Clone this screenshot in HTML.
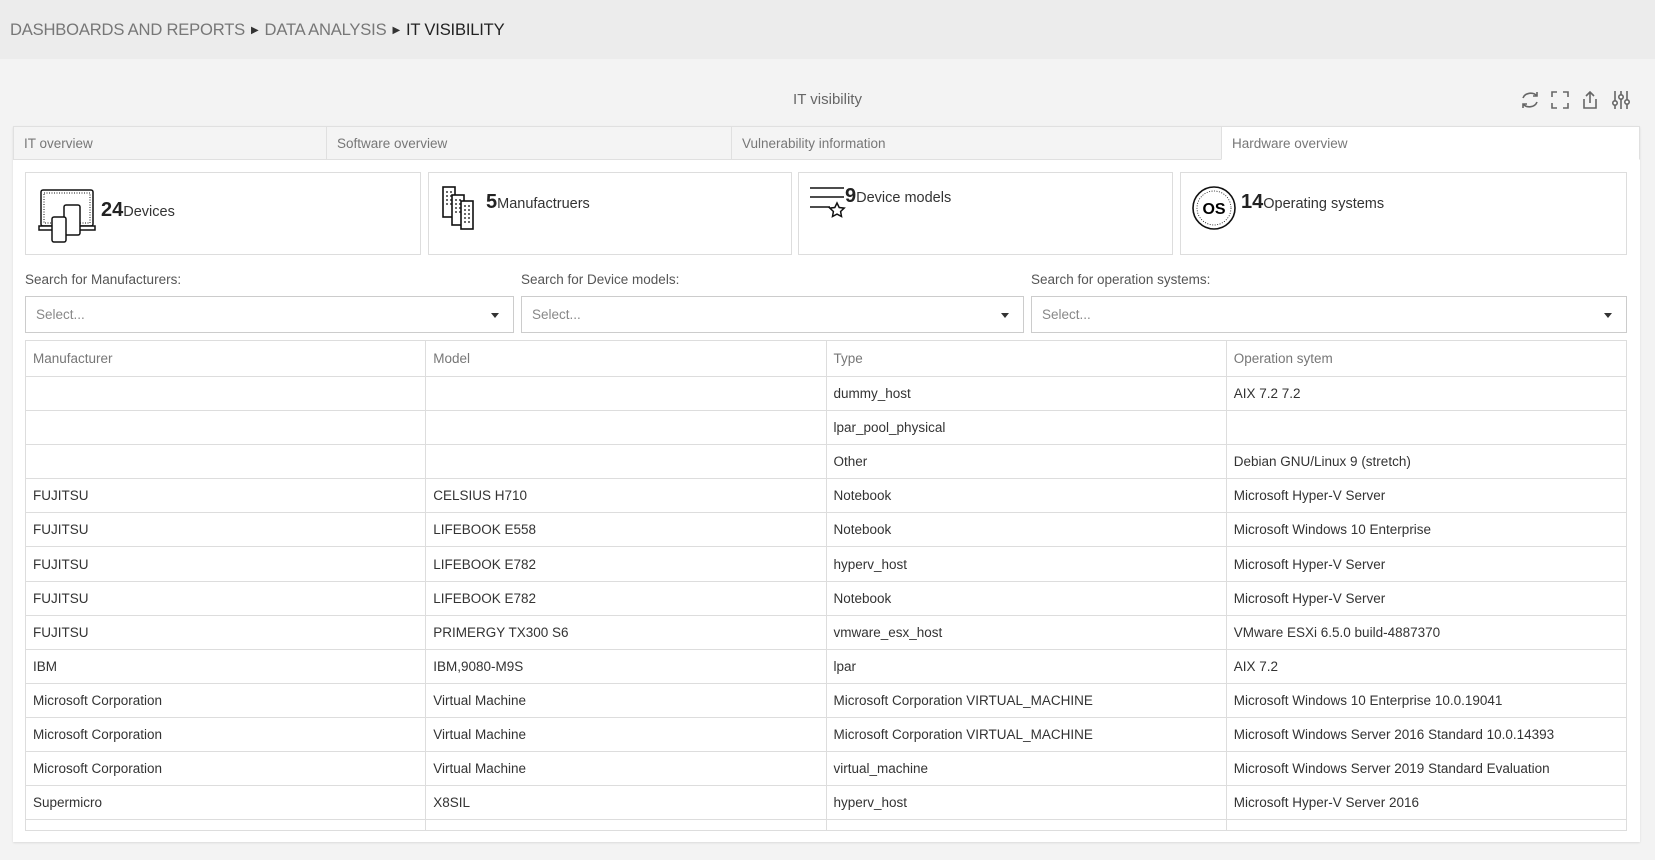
<!DOCTYPE html>
<html><head><style>
*{box-sizing:border-box;margin:0;padding:0}
body{width:1655px;height:860px;background:#f3f3f3;font-family:"Liberation Sans",sans-serif;color:#333;position:relative;overflow:hidden;font-size:13.5px}
.hdr{position:absolute;left:0;top:0;width:1655px;height:59px;background:#ececec}
.bc{position:absolute;left:10px;top:20px;font-size:16.6px;color:#777;letter-spacing:-0.2px}
.bc b{font-weight:normal;color:#222}
.bc i{font-style:normal;font-size:10px;color:#333;margin:0 6px;position:relative;top:-2px}
.title{position:absolute;left:0;width:1655px;top:91px;text-align:center;font-size:15px;color:#666}
.panel{position:absolute;left:13px;top:126px;width:1627px;height:716px;background:#fff;box-shadow:0 1px 2px rgba(0,0,0,.1)}
.tab{position:absolute;top:126px;height:34px;background:#f4f4f4;border:1px solid #e0e0e0;color:#777;padding:9px 10px;font-size:13.5px}
.card{position:absolute;top:172px;height:83px;border:1px solid #ddd;background:#fff}
.card .n{font-weight:bold;font-size:20px;color:#222}
.card .t{font-size:14.5px;color:#333}
.lbl{position:absolute;top:272px;font-size:13.5px;color:#555}
.sel{position:absolute;top:296px;height:37px;border:1px solid #ccc;background:#fff;color:#888;padding:10px 10px;font-size:13.5px}
.sel:after{content:"";position:absolute;right:14px;top:16px;border:4px solid transparent;border-top:5px solid #333}
table{position:absolute;left:25px;top:340px;width:1602px;border-collapse:collapse;table-layout:fixed}
td,th{border:1px solid #ddd;height:34.1px;padding:0 7px;text-align:left;font-weight:normal;font-size:13.5px;white-space:nowrap;overflow:hidden}
th{color:#777;height:36px}
</style></head><body>
<div class="hdr"><div class="bc">DASHBOARDS AND REPORTS<i>▶</i>DATA ANALYSIS<i>▶</i><b>IT VISIBILITY</b></div></div>
<div class="title">IT visibility</div>
<svg style="position:absolute;left:1518px;top:88px" width="125" height="24" fill="none" stroke="#666" stroke-width="1.6">
<path d="M5 10a8 7 0 0 1 14-2M19 4v4h-4M19 14a8 7 0 0 1-14 2M5 20v-4h4"/>
<path d="M34 9V4h5M45 4h5v5M50 15v5h-5M39 20h-5v-5"/>
<path d="M72 4v11M68 8l4-4 4 4M66 11v9h12v-9"/>
<path d="M97 3v18M103 3v18M109 3v18"/><circle cx="97" cy="15" r="2.2" fill="#fff"/><circle cx="103" cy="9" r="2.2" fill="#fff"/><circle cx="109" cy="14" r="2.2" fill="#fff"/>
</svg>
<div class="panel"></div>
<div class="tab" style="left:13px;width:314px">IT overview</div>
<div class="tab" style="left:326px;width:406px">Software overview</div>
<div class="tab" style="left:731px;width:491px">Vulnerability information</div>
<div class="tab" style="left:1221px;width:419px;background:#fff;border-bottom-color:#fff">Hardware overview</div>

<div class="card" style="left:25px;width:396px">
<svg style="position:absolute;left:12px;top:15px" width="58" height="56" fill="none" stroke="#111" stroke-width="1.5"><rect x="3" y="2" width="52" height="36" rx="2"/><rect x="6" y="5" width="46" height="30" stroke-dasharray="1 1.5" stroke-width="1"/><path d="M1 38h56v4H1z" fill="#fff"/><rect x="26" y="17" width="16" height="30" rx="2" fill="#fff"/><rect x="14" y="29" width="14" height="25" rx="2" fill="#fff"/></svg>
<div style="position:absolute;left:75px;top:26px"><span class="n">24</span><span class="t">Devices</span></div></div>
<div class="card" style="left:428px;width:364px">
<svg style="position:absolute;left:10px;top:10px" width="46" height="48" fill="#fff" stroke="#111" stroke-width="1.6"><rect x="4" y="4" width="12" height="30"/><path d="M7 9h2M11 9h2M7 13h2M11 13h2M7 17h2M11 17h2M7 21h2M11 21h2" stroke-width="1.2"/><rect x="13" y="12" width="12" height="30"/><path d="M16 17h2M20 17h2M16 21h2M20 21h2M16 25h2M20 25h2M16 29h2M20 29h2" stroke-width="1.2"/><rect x="22" y="18" width="12" height="28"/><path d="M25 23h2M29 23h2M25 27h2M29 27h2M25 31h2M29 31h2M25 35h2M29 35h2M25 39h2M29 39h2" stroke-width="1.2"/></svg>
<div style="position:absolute;left:57px;top:18px"><span class="n">5</span><span class="t">Manufactruers</span></div></div>
<div class="card" style="left:798px;width:375px">
<svg style="position:absolute;left:10px;top:12px" width="40" height="36" stroke="#111" stroke-width="1.5" fill="none"><path d="M1 3h34M1 12h34M1 22h20"/><path d="M28 18l2.2 4.5 5 .6-3.6 3.4 .9 5-4.5-2.4-4.5 2.4 .9-5-3.6-3.4 5-.6z"/></svg>
<div style="position:absolute;left:46px;top:12px"><span class="n">9</span><span class="t">Device models</span></div></div>
<div class="card" style="left:1180px;width:447px">
<svg style="position:absolute;left:10px;top:12px" width="46" height="46"><circle cx="23" cy="23" r="21" fill="none" stroke="#111" stroke-width="1.6"/><circle cx="23" cy="23" r="17" fill="none" stroke="#111" stroke-width="0.8" stroke-dasharray="1 1.5"/><text x="23" y="29" text-anchor="middle" font-family="Liberation Sans" font-weight="bold" font-size="16">OS</text></svg>
<div style="position:absolute;left:60px;top:18px"><span class="n">14</span><span class="t">Operating systems</span></div></div>

<div class="lbl" style="left:25px">Search for Manufacturers:</div>
<div class="lbl" style="left:521px">Search for Device models:</div>
<div class="lbl" style="left:1031px">Search for operation systems:</div>
<div class="sel" style="left:25px;width:489px">Select...</div>
<div class="sel" style="left:521px;width:503px">Select...</div>
<div class="sel" style="left:1031px;width:596px">Select...</div>

<table>
<tr><th>Manufacturer</th><th>Model</th><th>Type</th><th>Operation sytem</th></tr>
<tr><td></td><td></td><td>dummy_host</td><td>AIX 7.2 7.2</td></tr>
<tr><td></td><td></td><td>lpar_pool_physical</td><td></td></tr>
<tr><td></td><td></td><td>Other</td><td>Debian GNU/Linux 9 (stretch)</td></tr>
<tr><td>FUJITSU</td><td>CELSIUS H710</td><td>Notebook</td><td>Microsoft Hyper-V Server</td></tr>
<tr><td>FUJITSU</td><td>LIFEBOOK E558</td><td>Notebook</td><td>Microsoft Windows 10 Enterprise</td></tr>
<tr><td>FUJITSU</td><td>LIFEBOOK E782</td><td>hyperv_host</td><td>Microsoft Hyper-V Server</td></tr>
<tr><td>FUJITSU</td><td>LIFEBOOK E782</td><td>Notebook</td><td>Microsoft Hyper-V Server</td></tr>
<tr><td>FUJITSU</td><td>PRIMERGY TX300 S6</td><td>vmware_esx_host</td><td>VMware ESXi 6.5.0 build-4887370</td></tr>
<tr><td>IBM</td><td>IBM,9080-M9S</td><td>lpar</td><td>AIX 7.2</td></tr>
<tr><td>Microsoft Corporation</td><td>Virtual Machine</td><td>Microsoft Corporation VIRTUAL_MACHINE</td><td>Microsoft Windows 10 Enterprise 10.0.19041</td></tr>
<tr><td>Microsoft Corporation</td><td>Virtual Machine</td><td>Microsoft Corporation VIRTUAL_MACHINE</td><td>Microsoft Windows Server 2016 Standard 10.0.14393</td></tr>
<tr><td>Microsoft Corporation</td><td>Virtual Machine</td><td>virtual_machine</td><td>Microsoft Windows Server 2019 Standard Evaluation</td></tr>
<tr><td>Supermicro</td><td>X8SIL</td><td>hyperv_host</td><td>Microsoft Hyper-V Server 2016</td></tr>
<tr><td style="height:11px"></td><td style="height:11px"></td><td style="height:11px"></td><td style="height:11px"></td></tr>
</table>
</body></html>
